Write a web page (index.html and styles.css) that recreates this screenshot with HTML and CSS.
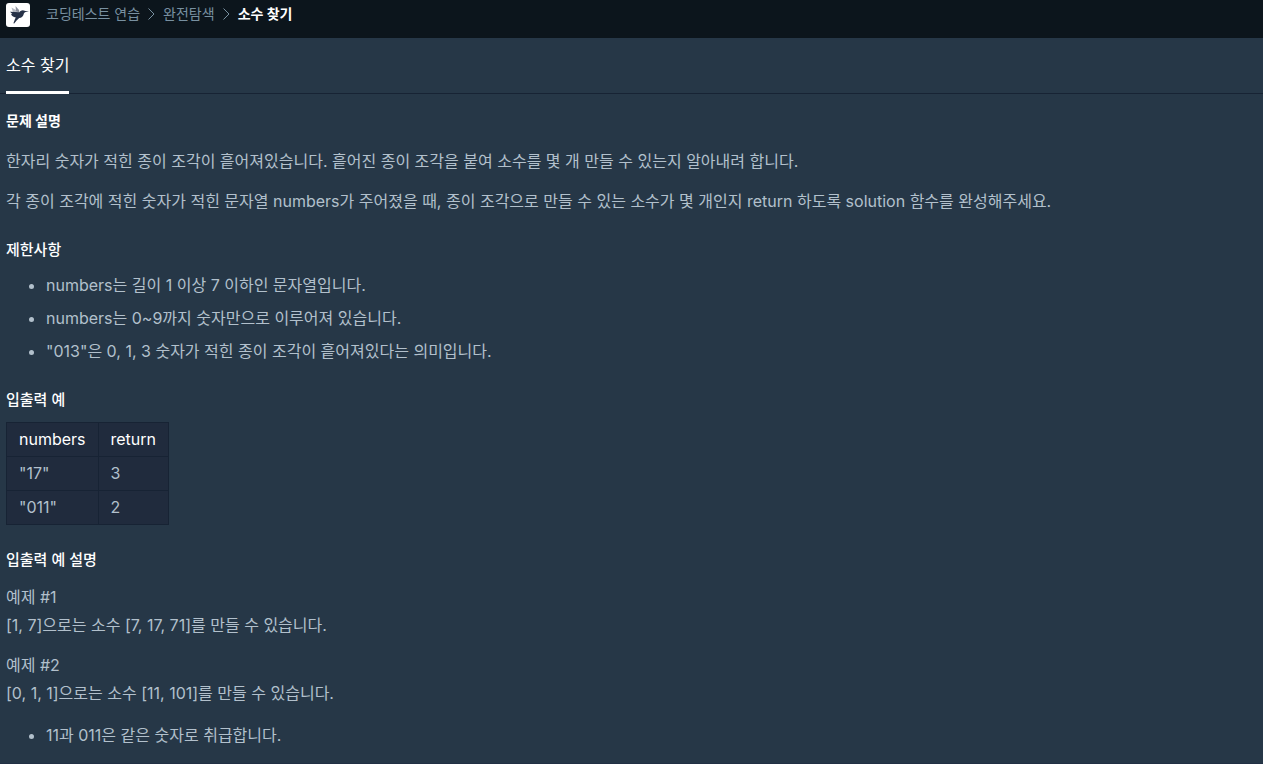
FILE: index.html
```
<!DOCTYPE html>
<html lang="ko">
<head>
  <meta charset="UTF-8">
  <title>소수 찾기</title>
  <link rel="stylesheet" href="styles.css">
</head>
<body>
  <nav class="navbar">
    <a class="logo" href="#" aria-label="홈">
      <svg width="24" height="24" viewBox="0 0 24 24">
        <rect width="24" height="24" rx="3" fill="#fff"/>
        <path d="M5.500 4.500l6 3.500 0 2.500-4.500-1z" fill="#b5b9c2"/>
        <path d="M9.500 3l3.500 4 .5 3-3.500-2z" fill="#8b909d"/>
        <path d="M4 8.800l9.500.4c1-1.200 2.200-2 4-1.800 1 .1 1.500.4 2 .7l3.500.5-3.500.5c-1.300.5-1.600 1.400-2 2.600-.6 1.900-2 3-4.300 3.400l-2.600 2.400-2.400 3-.8-.2 1.600-4.300.8-1.500c-2.500-.6-4.300-1.700-4.800-3.200l1.300-.2z" fill="#263147"/>
      </svg>
    </a>
    <ol class="breadcrumb">
      <li><a href="#">코딩테스트 연습</a></li>
      <li>
        <svg class="arrow" width="7" height="12" viewBox="0 0 7 12"><path d="M.5.500l5.500 5.500-5.500 5.500"/></svg>
        <a href="#">완전탐색</a>
      </li>
      <li class="active">
        <svg class="arrow" width="7" height="12" viewBox="0 0 7 12"><path d="M.5.500l5.500 5.500-5.500 5.500"/></svg>
        소수 찾기
      </li>
    </ol>
  </nav>

  <div class="tabs">
    <a class="tab" href="#">소수 찾기</a>
  </div>

  <main class="guide">
    <h6 class="guide-title">문제 설명</h6>
    <div class="markdown">
      <p>한자리 숫자가 적힌 종이 조각이 흩어져있습니다. 흩어진 종이 조각을 붙여 소수를 몇 개 만들 수 있는지 알아내려 합니다.</p>
      <p>각 종이 조각에 적힌 숫자가 적힌 문자열 numbers가 주어졌을 때, 종이 조각으로 만들 수 있는 소수가 몇 개인지 return 하도록 solution 함수를 완성해주세요.</p>

      <h5>제한사항</h5>
      <ul>
        <li>numbers는 길이 1 이상 7 이하인 문자열입니다.</li>
        <li>numbers는 0~9까지 숫자만으로 이루어져 있습니다.</li>
        <li>"013"은 0, 1, 3 숫자가 적힌 종이 조각이 흩어져있다는 의미입니다.</li>
      </ul>

      <h5>입출력 예</h5>
      <table>
        <thead>
          <tr><th>numbers</th><th>return</th></tr>
        </thead>
        <tbody>
          <tr><td>"17"</td><td>3</td></tr>
          <tr><td>"011"</td><td>2</td></tr>
        </tbody>
      </table>

      <h5>입출력 예 설명</h5>
      <p>예제 #1<br>[1, 7]으로는 소수 [7, 17, 71]를 만들 수 있습니다.</p>
      <p>예제 #2<br>[0, 1, 1]으로는 소수 [11, 101]를 만들 수 있습니다.</p>
      <ul>
        <li>11과 011은 같은 숫자로 취급합니다.</li>
      </ul>
    </div>
  </main>
</body>
</html>
```
FILE: styles.css
```
* {
  box-sizing: border-box;
}
body {
  margin: 0;
  background: #263747;
  color: #b2c0cc;
  font-family: Inter, "Noto Sans CJK KR", sans-serif;
  font-size: 16px;
  line-height: 28px;
}
a {
  color: inherit;
  text-decoration: none;
}

/* top bar */
.navbar {
  display: flex;
  align-items: flex-start;
  gap: 16px;
  height: 38px;
  padding: 3px 6px;
  background: #0c151c;
}
.logo {
  display: flex;
}
.breadcrumb {
  display: flex;
  gap: 8px;
  margin: 0;
  padding: 0;
  list-style: none;
  color: #7890a0;
  font-size: 14px;
  line-height: 22px;
}
.breadcrumb li {
  display: flex;
  align-items: center;
  gap: 8px;
}
.breadcrumb .active {
  color: #fff;
  font-weight: 700;
}
.arrow {
  fill: none;
  stroke: #7890a0;
}

/* tabs */
.tabs {
  display: flex;
  height: 56px;
  padding: 0 6px;
  border-bottom: 1px solid #172334;
}
.tab {
  height: 56px;
  border-bottom: 3px solid #fff;
  color: #fff;
  line-height: 54px;
}

/* problem text */
.guide {
  padding: 16px 6px 14px;
  border-bottom: 1px solid #213044;
}
.guide-title {
  margin: 0 0 16px;
  color: #fff;
  font-size: 14px;
  font-weight: 700;
  line-height: 21px;
}
.markdown p {
  margin: 12px 0;
}
.markdown h5 {
  margin: 24px 0 10px;
  color: #fff;
  font-size: 15px;
  font-weight: 500;
  line-height: 22px;
}
.markdown ul {
  margin: 0;
  padding-left: 40px;
}
.markdown p + ul {
  margin-top: 14px;
}
.markdown li + li {
  margin-top: 5px;
}
.markdown table {
  margin-top: 11px;
  border-collapse: collapse;
  background: #202b3d;
}
.markdown th,
.markdown td {
  padding: 4px 12px;
  border: 1px solid #172334;
  line-height: 25px;
  text-align: left;
}
.markdown th {
  color: #fff;
  font-weight: 400;
}
```
